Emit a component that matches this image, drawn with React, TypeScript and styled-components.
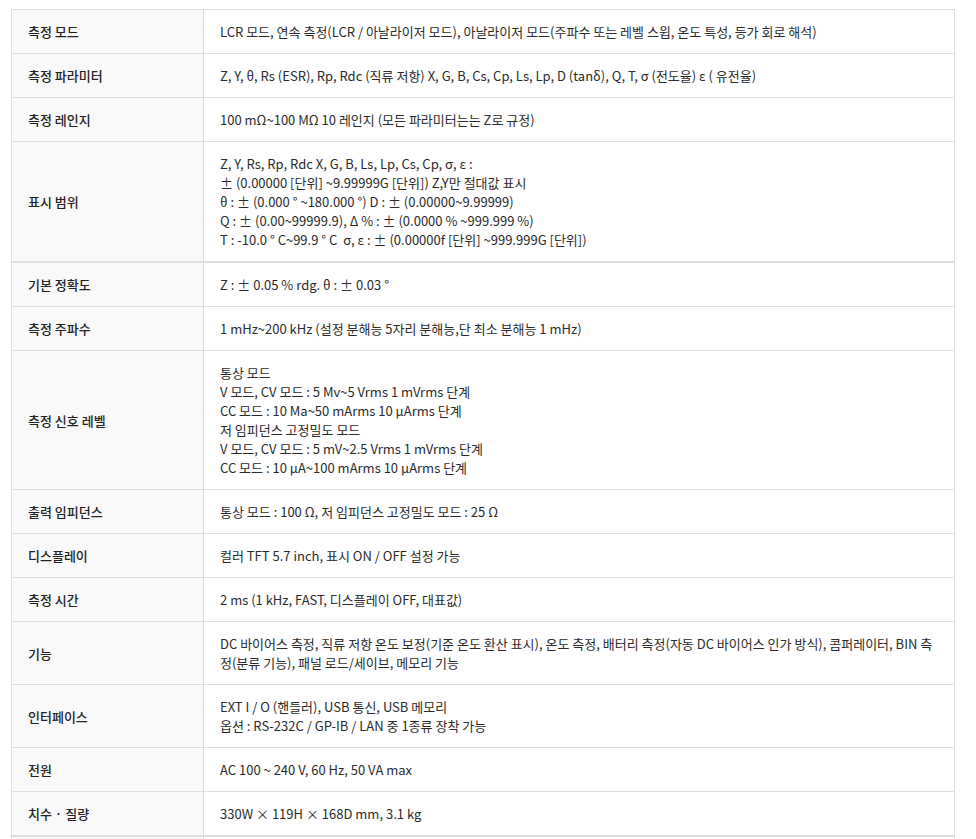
import React from 'react'
import styled, { createGlobalStyle } from 'styled-components'

const GlobalStyle = createGlobalStyle`
  body {
    margin: 0;
    background: #ffffff;
    font-family: 'Noto Sans CJK KR', 'Noto Sans', sans-serif;
    color: #333333;
  }
`

const Page = styled.div`
  padding: 9px 21px 0 11px;
`

const SpecTable = styled.table`
  width: 944px;
  border-collapse: collapse;
  table-layout: fixed;
  border-top: 1px solid #dedede;
  border-right: 1px solid #dedede;
  border-left: 1px solid #dedede;
  font-size: 13px;
  line-height: 19px;
`

const Row = styled.tr<{ thick?: boolean }>`
  border-top: ${({ thick }) => (thick ? '2px' : '1px')} solid #dedede;
`

const Label = styled.th`
  width: 159px;
  padding: 12px 16px;
  text-align: left;
  vertical-align: middle;
  font-weight: 500;
  color: #222222;
  background: #f9f9f9;
  border-right: 1px solid #dedede;
`

const Value = styled.td`
  padding: 12px 16px;
  text-align: left;
  vertical-align: middle;
  color: #2b2b2b;
  word-break: break-all;
`

type Spec = {
  label: string
  lines: string[]
  thick?: boolean
}

const specs: Spec[] = [
  {
    label: '측정 모드',
    lines: [
      'LCR 모드, 연속 측정(LCR / 아날라이저 모드), 아날라이저 모드(주파수 또는 레벨 스윕, 온도 특성, 등가 회로 해석)',
    ],
  },
  {
    label: '측정 파라미터',
    lines: [
      'Z, Y, θ, Rs (ESR), Rp, Rdc (직류 저항) X, G, B, Cs, Cp, Ls, Lp, D (tanδ), Q, T, σ (전도율) ε ( 유전율)',
    ],
  },
  {
    label: '측정 레인지',
    lines: ['100 mΩ~100 MΩ 10 레인지 (모든 파라미터는는 Z로 규정)'],
  },
  {
    label: '표시 범위',
    lines: [
      'Z, Y, Rs, Rp, Rdc X, G, B, Ls, Lp, Cs, Cp, σ, ε :',
      '± (0.00000 [단위] ~9.99999G [단위]) Z,Y만 절대값 표시',
      'θ : ± (0.000 ° ~180.000 °) D : ± (0.00000~9.99999)',
      'Q : ± (0.00~99999.9), Δ % : ± (0.0000 % ~999.999 %)',
      'T : -10.0 ° C~99.9 ° C\u00a0\u00a0σ, ε : ± (0.00000f [단위] ~999.999G [단위])',
    ],
  },
  {
    label: '기본 정확도',
    lines: ['Z : ± 0.05 % rdg. θ : ± 0.03 °'],
    thick: true,
  },
  {
    label: '측정 주파수',
    lines: ['1 mHz~200 kHz (설정 분해능 5자리 분해능,단 최소 분해능 1 mHz)'],
  },
  {
    label: '측정 신호 레벨',
    lines: [
      '통상 모드',
      'V 모드, CV 모드 : 5 Mv~5 Vrms 1 mVrms 단계',
      'CC 모드 : 10 Ma~50 mArms 10 μArms 단계',
      '저 임피던스 고정밀도 모드',
      'V 모드, CV 모드 : 5 mV~2.5 Vrms 1 mVrms 단계',
      'CC 모드 : 10 μA~100 mArms 10 μArms 단계',
    ],
  },
  {
    label: '출력 임피던스',
    lines: ['통상 모드 : 100 Ω, 저 임피던스 고정밀도 모드 : 25 Ω'],
  },
  {
    label: '디스플레이',
    lines: ['컬러 TFT 5.7 inch, 표시 ON / OFF 설정 가능'],
  },
  {
    label: '측정 시간',
    lines: ['2 ms (1 kHz, FAST, 디스플레이 OFF, 대표값)'],
  },
  {
    label: '기능',
    lines: [
      'DC 바이어스 측정, 직류 저항 온도 보정(기준 온도 환산 표시), 온도 측정, 배터리 측정(자동 DC 바이어스 인가 방식), 콤퍼레이터, BIN 측정(분류 기능), 패널 로드/세이브, 메모리 기능',
    ],
  },
  {
    label: '인터페이스',
    lines: [
      'EXT I / O (핸들러), USB 통신, USB 메모리',
      '옵션 : RS-232C / GP-IB / LAN 중 1종류 장착 가능',
    ],
  },
  {
    label: '전원',
    lines: ['AC 100 ~ 240 V, 60 Hz, 50 VA max'],
  },
  {
    label: '치수 · 질량',
    lines: ['330W × 119H × 168D mm, 3.1 kg'],
  },
]

function App() {
  return (
    <Page>
      <GlobalStyle />
      <SpecTable>
        <tbody>
          {specs.map((spec) => (
            <Row key={spec.label} thick={spec.thick}>
              <Label>{spec.label}</Label>
              <Value>
                {spec.lines.map((line, i) => (
                  <React.Fragment key={i}>
                    {i > 0 && <br />}
                    {line}
                  </React.Fragment>
                ))}
              </Value>
            </Row>
          ))}
          <Row thick>
            <Label />
            <Value />
          </Row>
        </tbody>
      </SpecTable>
    </Page>
  )
}

export default App
